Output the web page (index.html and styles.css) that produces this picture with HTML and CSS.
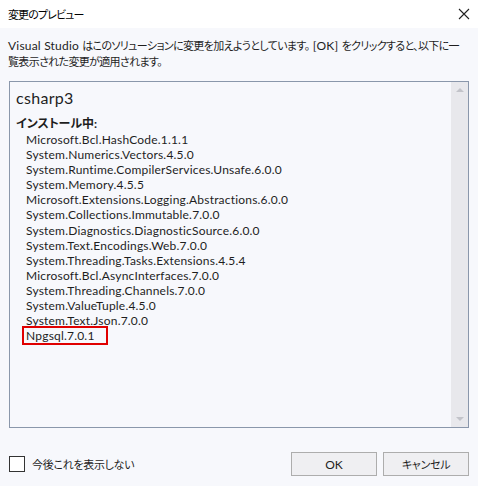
FILE: index.html
```html
<!DOCTYPE html>
<html lang="ja">
<head>
<meta charset="utf-8">
<link rel="stylesheet" href="styles.css">
</head>
<body>
<div class="dialog">
  <div class="titlebar">
    <span class="title ja">変更のプレビュー</span>
    <svg class="close" width="12" height="12" viewBox="0 0 12 12"><path d="M1 1L11 11M11 1L1 11" stroke="#222" stroke-width="1.1" fill="none"/></svg>
  </div>
  <div class="body">
    <p class="desc">Visual Studio <span class="ja">はこのソリューションに変更を加えようとしています。</span> [OK] <span class="ja">をクリックすると、以下に一覧表示された変更が適用されます。</span></p>
    <div class="box">
      <div class="content">
        <div class="project">csharp3</div>
        <div class="section">インストール中:</div>
        <ul class="items">
          <li>Microsoft.Bcl.HashCode.1.1.1</li>
          <li>System.Numerics.Vectors.4.5.0</li>
          <li>System.Runtime.CompilerServices.Unsafe.6.0.0</li>
          <li>System.Memory.4.5.5</li>
          <li>Microsoft.Extensions.Logging.Abstractions.6.0.0</li>
          <li>System.Collections.Immutable.7.0.0</li>
          <li>System.Diagnostics.DiagnosticSource.6.0.0</li>
          <li>System.Text.Encodings.Web.7.0.0</li>
          <li>System.Threading.Tasks.Extensions.4.5.4</li>
          <li>Microsoft.Bcl.AsyncInterfaces.7.0.0</li>
          <li>System.Threading.Channels.7.0.0</li>
          <li>System.ValueTuple.4.5.0</li>
          <li>System.Text.Json.7.0.0</li>
          <li><span class="hl">Npgsql.7.0.1</span></li>
        </ul>
      </div>
      <div class="scrollbar">
        <span class="arrow up"></span>
        <span class="arrow down"></span>
      </div>
    </div>
    <div class="footer">
      <label class="check"><span class="checkbox"></span><span class="ja">今後これを表示しない</span></label>
      <div class="buttons">
        <button class="btn">OK</button>
        <button class="btn"><span class="ja">キャンセル</span></button>
      </div>
    </div>
  </div>
</div>
</body>
</html>
```
FILE: styles.css
```css
* { box-sizing: border-box; }
html, body { margin: 0; padding: 0; }
body {
  width: 478px;
  height: 486px;
  background: #f7f8fc;
  font-family: "Lato", "Noto Sans CJK JP", sans-serif;
  font-feature-settings: "palt";
  font-size: 12px;
  letter-spacing: 0.2px;
  color: #1e1e1e;
  overflow: hidden;
}
.ja { font-size: 11px; letter-spacing: -0.3px; }
.dialog { display: flex; flex-direction: column; height: 486px; }
.titlebar {
  height: 29px;
  background: #ffffff;
  display: flex;
  align-items: center;
  justify-content: space-between;
  padding: 0 7px 1px 8px;
}
.title { color: #000; letter-spacing: -0.9px; }
.close { display: block; margin-right: 1px; }
.body {
  flex: 1;
  display: flex;
  flex-direction: column;
  padding: 10px 9px 10px 9px;
}
.desc {
  margin: 0 0 11px -1px;
  line-height: 16px;
}
.desc .ja { letter-spacing: -0.65px; }
.box {
  height: 347px;
  width: 460px;
  border: 1px solid #8a97ab;
  background: #f7f8fc;
  display: flex;
}
.content { flex: 1; padding: 6px 6px; }
.project { font-size: 16px; line-height: 20px; margin-bottom: 8px; letter-spacing: 0.3px; }
.section { font-weight: bold; line-height: 15px; letter-spacing: 0; }
.items { list-style: none; margin: 1px 0 0 0; padding: 0 0 0 10px; line-height: 15.1px; }
.items li { white-space: nowrap; }
.hl {
  display: inline-block;
  vertical-align: top;
  border: 2px solid #e00000;
  line-height: 15px;
  margin: -2px 0 -2px -4px;
  padding: 0 11px 0 2px;
}
.scrollbar {
  width: 17px;
  background: #e8e8ec;
  display: flex;
  flex-direction: column;
  justify-content: space-between;
  align-items: center;
  padding: 6px 0;
}
.arrow { width: 0; height: 0; border-left: 4px solid transparent; border-right: 4px solid transparent; }
.arrow.up { border-bottom: 4px solid #c2c3c9; }
.arrow.down { border-top: 4px solid #c2c3c9; }
.footer {
  margin-top: 24px;
  display: flex;
  align-items: center;
  justify-content: space-between;
}
.check { display: flex; align-items: center; gap: 7px; }
.checkbox {
  width: 16px; height: 16px;
  border: 1px solid #333;
  background: #fff;
}
.buttons { display: flex; gap: 6px; }
.btn {
  width: 86px; height: 24px;
  border: 1px solid #adadad;
  background: #efeff2;
  font-family: inherit;
  font-feature-settings: "palt";
  font-size: 12px;
  color: #1e1e1e;
  padding: 0;
}
```
